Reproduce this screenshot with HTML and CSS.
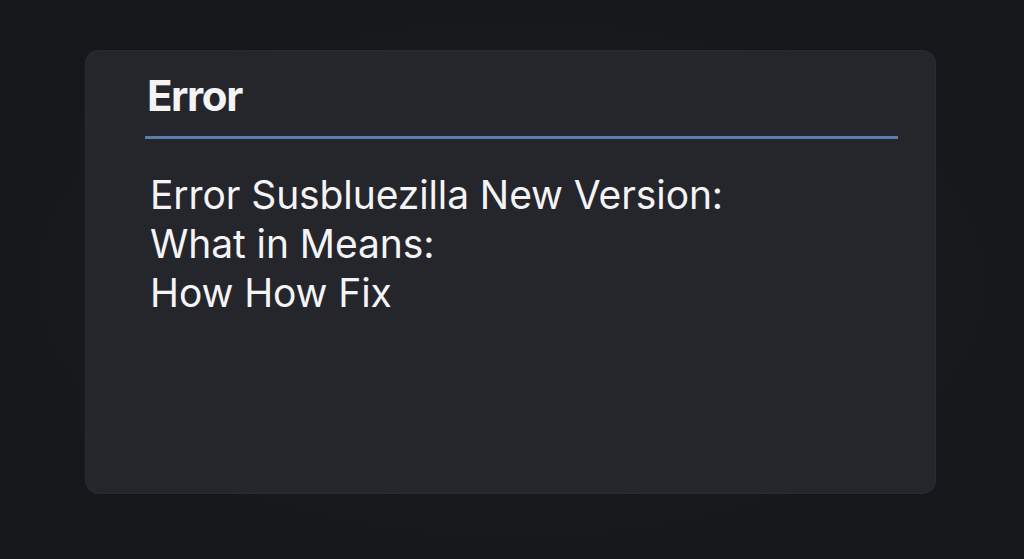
FILE: index.html
```html
<!DOCTYPE html>
<html>
<head>
<meta charset="utf-8">
<link rel="stylesheet" href="styles.css">
</head>
<body>
<div class="page">
  <div class="card">
    <div class="header">
      <h1 class="title">Error</h1>
    </div>
    <div class="content">
      <p class="line">Error Susbluezilla New Version:</p>
      <p class="line">What in Means:</p>
      <p class="line">How How Fix</p>
    </div>
  </div>
</div>
</body>
</html>
```
FILE: styles.css
```css
html, body {
  margin: 0;
  padding: 0;
  background: #17181c;
}
.page {
  width: 1024px;
  height: 559px;
  padding: 50px 88px 65px 85px;
  box-sizing: border-box;
  background: radial-gradient(ellipse at 50% 50%, #1c1d21 0%, #16171b 80%);
}
.card {
  height: 444px;
  background: #25262b;
  border-radius: 14px;
  box-shadow: 0 0 0 1px #2a2b30 inset;
  padding: 25px 38px 0 60px;
  box-sizing: border-box;
  font-family: Inter, "Liberation Sans", sans-serif;
  color: #f4f4f6;
}
.header {
  border-bottom: 3px solid #5a7eaf;
}
.title {
  margin: 0 0 19px 2px;
  font-size: 42px;
  font-weight: 700;
  line-height: 42px;
  letter-spacing: -1.4px;
}
.content {
  padding-top: 31px;
  padding-left: 5px;
}
.line {
  margin: 0;
  font-size: 39px;
  line-height: 49px;
  font-weight: 400;
  letter-spacing: -0.1px;
}
```
